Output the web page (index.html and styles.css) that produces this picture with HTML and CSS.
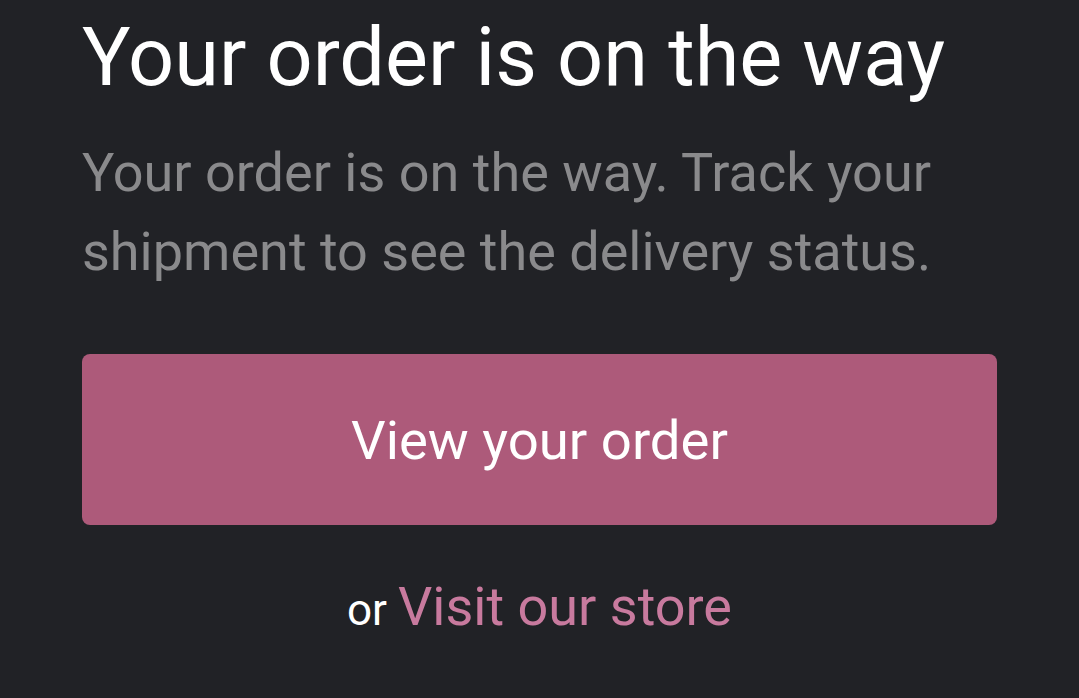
FILE: index.html
```html
<!DOCTYPE html>
<html lang="en">
<head>
  <meta charset="UTF-8" />
  <meta name="viewport" content="width=device-width, initial-scale=1.0">
  <title>Order on the way</title>
  <link rel="stylesheet" href="styles.css">
</head>
<body>
  <div class="content">
    <h1>Your order is on the way</h1>
    <p class="lead">Your order is on the way. Track your shipment to see the delivery status.</p>

    <a class="button" href="#">View your order</a>

    <p class="alt">or <a href="#">Visit our store</a></p>
  </div>
</body>
</html>
```

FILE: styles.css
```css
body {
  margin: 0;
  background-color: #212226;
  font-family: Roboto, "Liberation Sans", sans-serif;
  color: #ffffff;
}

.content {
  padding: 0 82px;
  width: 915px;
}

h1 {
  font-size: 81px;
  font-weight: 400;
  line-height: 1;
  margin: 17px 0 0 0;
}

.lead {
  color: #8a8a8c;
  font-size: 54px;
  line-height: 79px;
  margin: 35px 0 0 0;
}

.button {
  display: flex;
  align-items: center;
  justify-content: center;
  height: 171px;
  margin-top: 63px;
  background-color: #ad5a7a;
  border-radius: 8px;
  color: #ffffff;
  font-size: 54.5px;
  text-decoration: none;
}

.alt {
  text-align: center;
  font-size: 44px;
  line-height: 64px;
  margin: 50px 0 0 0;
}

.alt a {
  color: #c87a9e;
  font-size: 54px;
  text-decoration: none;
}
```
